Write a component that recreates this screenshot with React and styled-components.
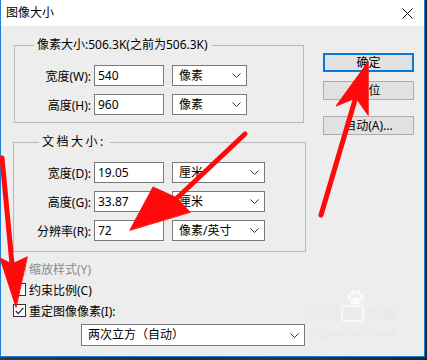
import React from 'react';
import styled, { createGlobalStyle } from 'styled-components';

const font = `"Noto Sans", "Noto Sans CJK SC", sans-serif`;

const GlobalStyle = createGlobalStyle`
  html, body {
    margin: 0;
    padding: 0;
    background: #2e2e2e;
  }
  body {
    width: 427px;
    height: 360px;
    overflow: hidden;
    font-family: ${font};
    font-size: 12px;
    color: #000;
  }
`;

const Stage = styled.div`
  position: relative;
  width: 427px;
  height: 360px;
  background: linear-gradient(90deg, #3a3a3a, #2a2a2a 40%, #353535 70%, #222);
`;

const Window = styled.div`
  width: 425px;
  height: 357px;
  box-sizing: border-box;
  border: 1px solid #1b7fd8;
  border-top: none;
  background: #ededed;
  display: flex;
  flex-direction: column;
`;

const TitleBar = styled.div`
  height: 26px;
  flex: none;
  background: #fff;
  display: flex;
  align-items: center;
  justify-content: space-between;
  padding: 0 11px 0 5px;
  font-size: 12px;
  line-height: 16px;
`;

const Body = styled.div`
  flex: 1;
  display: flex;
  gap: 16px;
  padding: 10px 0 0 12px;
`;

const LeftCol = styled.div`
  width: 294px;
  display: flex;
  flex-direction: column;
`;

const Group = styled.fieldset`
  margin: ${(p) => p.$mt || 0}px 0 0 ${(p) => p.$ml || 0}px;
  width: ${(p) => p.$w}px;
  box-sizing: border-box;
  border: 1px solid #bababa;
  padding: 11px 0 ${(p) => p.$pb}px ${(p) => p.$pl}px;
  display: flex;
  flex-direction: column;
  gap: 8px;
`;

const Legend = styled.legend`
  margin-left: ${(p) => p.$ml}px;
  padding: 0 4px 0 3px;
  line-height: 18px;
  height: 18px;
  letter-spacing: ${(p) => p.$ls || 0}px;
`;

const Row = styled.div`
  display: flex;
  align-items: center;
  height: 21px;
`;

const Label = styled.span`
  width: 70px;
  text-align: right;
  white-space: nowrap;
`;

const Field = styled.div`
  width: 70px;
  height: 21px;
  box-sizing: border-box;
  margin-left: 3px;
  border: 1px solid #7a7a7a;
  background: #fff;
  padding: 0 3px;
  display: flex;
  align-items: center;
  line-height: 16px;
`;

const Combo = styled.div`
  width: ${(p) => p.$w}px;
  height: ${(p) => p.$h || 21}px;
  box-sizing: border-box;
  margin-left: ${(p) => p.$ml ?? 8}px;
  margin-top: ${(p) => p.$mt || 0}px;
  border: 1px solid #7a7a7a;
  background: #fff;
  padding: 0 5px 0 6px;
  display: flex;
  align-items: center;
  justify-content: space-between;
  line-height: 16px;
`;

const Chevron = () => (
  <svg width="9" height="5" viewBox="0 0 9 5">
    <path d="M0.5 0.5 L4.5 4.5 L8.5 0.5" fill="none" stroke="#333" strokeWidth="1" />
  </svg>
);

const CheckRow = styled.div`
  display: flex;
  align-items: center;
  gap: 3px;
  height: 21px;
  margin-top: ${(p) => p.$mt || 0}px;
  color: ${(p) => (p.$disabled ? '#8a8a8a' : '#000')};
`;

const Box = styled.span`
  width: 13px;
  height: 13px;
  box-sizing: border-box;
  border: 1px solid ${(p) => (p.$disabled ? '#c4c4c4' : '#333')};
  background: #fff;
  display: flex;
  align-items: center;
  justify-content: center;
`;

const RightCol = styled.div`
  display: flex;
  flex-direction: column;
  padding-top: 17px;
`;

const Button = styled.div`
  width: 91px;
  height: 19px;
  box-sizing: border-box;
  margin-top: ${(p) => p.$mt || 0}px;
  background: #e1e1e1;
  border: ${(p) => (p.$primary ? '2px solid #0a78d7' : '1px solid #adadad')};
  display: flex;
  align-items: center;
  justify-content: center;
  line-height: 16px;
`;

const Watermark = styled.div`
  position: absolute;
  left: 309px;
  top: 304px;
  color: rgba(255, 255, 255, 0.62);
  text-shadow: 0 0 1px rgba(0, 0, 0, 0.12);
  display: flex;
  flex-direction: column;
  align-items: flex-start;
  pointer-events: none;
`;

const Logo = styled.div`
  display: flex;
  align-items: flex-end;
  gap: 2px;
  font-family: "Liberation Sans", sans-serif;
  font-weight: bold;
  font-size: 19px;
  line-height: 18px;
`;

const DuBox = styled.span`
  position: relative;
  border: 2px solid rgba(255, 255, 255, 0.62);
  border-radius: 4px;
  padding: 0 1px;
  font-size: 14px;
  line-height: 13px;
`;

const Paw = styled.svg`
  position: absolute;
  left: 2px;
  top: -18px;
`;

const Jing = styled.span`
  font-family: "Noto Sans CJK SC", sans-serif;
  font-size: 14px;
  font-weight: normal;
  margin-left: 2px;
`;

const Url = styled.span`
  font-family: "Liberation Serif", serif;
  font-size: 11px;
  line-height: 14px;
  margin-top: 3px;
  letter-spacing: 0.3px;
`;

const Overlay = styled.svg`
  position: absolute;
  left: 0;
  top: 0;
  pointer-events: none;
`;

export default function App() {
  return (
    <>
      <GlobalStyle />
      <Stage>
        <Window>
          <TitleBar>
            <span>图像大小</span>
            <svg width="11" height="11" viewBox="0 0 11 11">
              <path d="M0.5 0.5 L10.5 10.5 M10.5 0.5 L0.5 10.5" stroke="#111" strokeWidth="1" />
            </svg>
          </TitleBar>
          <Body>
            <LeftCol>
              <Group $w={290} $ml={1} $pl={6} $pb={7}>
                <Legend $ml={13}>像素大小:506.3K(之前为506.3K)</Legend>
                <Row>
                  <Label>宽度(W):</Label>
                  <Field>540</Field>
                  <Combo $w={75}>像素<Chevron /></Combo>
                </Row>
                <Row>
                  <Label>高度(H):</Label>
                  <Field>960</Field>
                  <Combo $w={75}>像素<Chevron /></Combo>
                </Row>
              </Group>
              <Group $w={293} $mt={10} $pl={7} $pb={10}>
                <Legend $ml={18} $ls={2.5}>文档大小:</Legend>
                <Row>
                  <Label>宽度(D):</Label>
                  <Field>19.05</Field>
                  <Combo $w={93}>厘米<Chevron /></Combo>
                </Row>
                <Row>
                  <Label>高度(G):</Label>
                  <Field>33.87</Field>
                  <Combo $w={93}>厘米<Chevron /></Combo>
                </Row>
                <Row>
                  <Label>分辨率(R):</Label>
                  <Field>72</Field>
                  <Combo $w={93}>像素/英寸<Chevron /></Combo>
                </Row>
              </Group>
              <CheckRow $mt={6} $disabled>
                <Box $disabled />
                缩放样式(Y)
              </CheckRow>
              <CheckRow>
                <Box />
                约束比例(C)
              </CheckRow>
              <CheckRow>
                <Box>
                  <svg width="9" height="8" viewBox="0 0 9 8">
                    <path d="M0.8 4 L3.3 6.6 L8.3 0.8" fill="none" stroke="#222" strokeWidth="1.2" />
                  </svg>
                </Box>
                重定图像像素(I):
              </CheckRow>
              <Combo $w={224} $h={22} $ml={68} $mt={3}>
                两次立方（自动）<Chevron />
              </Combo>
            </LeftCol>
            <RightCol>
              <Button $primary>确定</Button>
              <Button $mt={9}>复位</Button>
              <Button $mt={16}>自动(A)...</Button>
            </RightCol>
          </Body>
        </Window>

        <Watermark>
          <Logo>
            Bai
            <DuBox>
              <Paw width="20" height="16" viewBox="0 0 20 16">
                <g fill="rgba(255,255,255,0.7)">
                  <ellipse cx="4" cy="8" rx="2.2" ry="2.8" />
                  <ellipse cx="8" cy="3.5" rx="2.2" ry="2.8" />
                  <ellipse cx="13" cy="3.5" rx="2.2" ry="2.8" />
                  <ellipse cx="17" cy="8" rx="2.2" ry="2.8" />
                  <path d="M10.5 8 C7 8 5 12 5.5 14 C6 16 9 15 10.5 15 C12 15 15 16 15.5 14 C16 12 14 8 10.5 8 Z" />
                </g>
              </Paw>
              du
            </DuBox>
            <Jing>经验</Jing>
          </Logo>
          <Url>jingyan.baidu.com</Url>
        </Watermark>

        <Overlay width="427" height="360" viewBox="0 0 427 360">
          <g fill="#ff0a0a" stroke="#ff0a0a" strokeLinecap="round">
            <line x1="321" y1="215" x2="355" y2="100" strokeWidth="5" />
            <polygon points="368,62 336,106 356,98 368,115" strokeWidth="1" />
            <line x1="245" y1="134" x2="176" y2="199" strokeWidth="5" />
            <polygon points="130,230 153,187 177,198 190,212" strokeWidth="1" />
            <line x1="2" y1="158" x2="12" y2="264" strokeWidth="5" />
            <polygon points="16,307 0,258 12,264 27,257" strokeWidth="1" />
          </g>
        </Overlay>
      </Stage>
    </>
  );
}
